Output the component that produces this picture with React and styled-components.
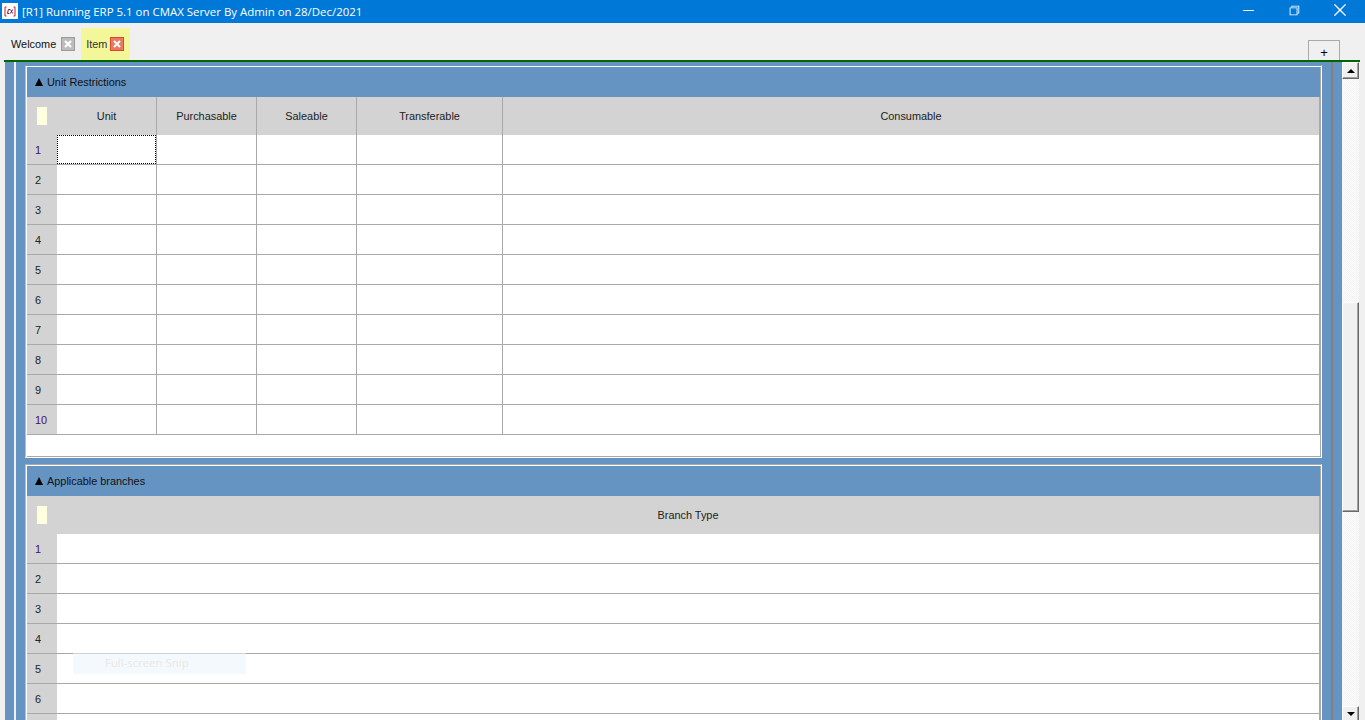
import React from "react";
import styled, { createGlobalStyle } from "styled-components";
import { VscChromeMinimize, VscChromeRestore, VscChromeClose } from "react-icons/vsc";

const GlobalStyle = createGlobalStyle`
  html, body {
    margin: 0;
    padding: 0;
    height: 720px;
    overflow: hidden;
    background: #f0f0f0;
  }
`;

const Page = styled.div`
  width: 1365px;
  height: 720px;
  display: flex;
  flex-direction: column;
  overflow: hidden;
  font-family: "Liberation Sans", Arial, sans-serif;
  font-size: 10.9px;
  color: #000;
`;

const TitleBar = styled.div`
  height: 23px;
  flex: none;
  display: flex;
  align-items: center;
  padding-right: 2px;
  background: #0078d7;
  color: #fff;
`;

const AppIcon = styled.svg`
  width: 16px;
  height: 16px;
  margin: -1px 4px 0 2px;
  flex: none;
`;

const TitleText = styled.span`
  font-family: "Open Sans", "Liberation Sans", sans-serif;
  font-size: 11.45px;
  flex: 1;
`;

const WindowButton = styled.button`
  width: 46px;
  height: 23px;
  padding: 0;
  border: 0;
  background: none;
  color: #fff;
  display: flex;
  align-items: center;
  justify-content: center;
  margin-top: -3px;
  font-size: ${(p) => p.$size || 16}px;
`;

const TabStrip = styled.div`
  height: 37px;
  flex: none;
  display: flex;
  align-items: stretch;
  padding: 5px 25px 0 5px;
  box-sizing: border-box;
`;

const Tab = styled.div`
  display: flex;
  align-items: center;
  gap: ${(p) => (p.$active ? 3 : 5)}px;
  height: 32px;
  padding: 0 6px 0 ${(p) => (p.$active ? 5 : 6)}px;
  background: ${(p) => (p.$active ? "#f4f799" : "transparent")};
  color: ${(p) => (p.$active ? "#333" : "#111")};
`;

const TabClose = styled.span`
  width: 14px;
  height: 14px;
  box-sizing: border-box;
  border: 1px solid ${(p) => (p.$active ? "#d9492f" : "#999")};
  background: ${(p) => (p.$active ? "#e77a5f" : "#bdbdbd")};
  display: flex;
  align-items: center;
  justify-content: center;
`;

const AddTab = styled.div`
  margin-left: auto;
  align-self: flex-end;
  width: 32px;
  height: 20px;
  box-sizing: border-box;
  padding-top: 3px;
  border: 1px solid #aaa;
  border-bottom: 0;
  display: flex;
  align-items: center;
  justify-content: center;
  font-size: 13px;
`;

const GreenRule = styled.div`
  height: 2px;
  flex: none;
  margin: 0 5px 0 4px;
  background: #006400;
`;

const Body = styled.div`
  flex: 1;
  min-height: 0;
  display: flex;
  padding-left: 5px;
`;

const OuterFrame = styled.div`
  flex: 1;
  min-width: 0;
  padding-left: 9px;
  background: #6594c2;
  display: flex;
`;

const InnerFrame = styled.div`
  flex: 1;
  min-width: 0;
  border-left: 2px solid #f0f0f0;
  border-right: 2px solid #808080;
  margin-right: 9px;
  padding: 3px 9px 0 9px;
  display: flex;
  flex-direction: column;
  gap: 6px;
  overflow: hidden;
`;

const Panel = styled.section`
  flex: none;
  border: 1px solid;
  border-color: ${(p) => (p.$clipped ? "#6594c2" : "#a9a9a9")} #fff #fff #bdbdbd;
  box-shadow: inset 1px 1px 0 #fff, inset -1px -1px 0 #a9a9a9;
  background: #fff;
  padding: 1px;
  box-sizing: border-box;
`;

const PanelHeader = styled.div`
  height: 30px;
  background: #6594c2;
  display: flex;
  align-items: center;
  padding-left: 8px;
  gap: 4px;
  color: #111;
`;

const Caret = styled.span`
  width: 0;
  height: 0;
  border-left: 4px solid transparent;
  border-right: 4px solid transparent;
  border-bottom: 8px solid #000;
`;

const Grid = styled.div`
  display: grid;
  grid-template-columns: ${(p) => p.$columns};
  border-right: 1px solid #a9a9a9;
`;

const HeaderCorner = styled.div`
  height: 38px;
  background: #d3d3d3;
  display: flex;
  align-items: center;
  padding-left: 10px;
`;

const Swatch = styled.div`
  width: 10px;
  height: 18px;
  background: #ffffe0;
`;

const HeaderCell = styled.div`
  height: 38px;
  background: #d3d3d3;
  border-right: ${(p) => (p.$last ? "0" : "1px solid #a9a9a9")};
  display: flex;
  align-items: center;
  justify-content: center;
  box-sizing: border-box;
  color: #222;
`;

const RowNumber = styled.div`
  height: 30px;
  box-sizing: border-box;
  padding-left: 8px;
  background: #d3d3d3;
  border-bottom: 1px solid #a9a9a9;
  display: flex;
  align-items: center;
  color: ${(p) => p.$color};
`;

const Cell = styled.div`
  height: 30px;
  box-sizing: border-box;
  background: #fff;
  border-bottom: 1px solid #a9a9a9;
  border-right: ${(p) => (p.$last ? "0" : "1px solid #a9a9a9")};
  position: relative;
`;

const FocusBox = styled.div`
  position: absolute;
  inset: 0;
  border: 1px dotted #000;
`;

const PanelFiller = styled.div`
  height: 21px;
`;

const SnipHint = styled.div`
  position: absolute;
  left: 73px;
  top: 653px;
  width: 173px;
  height: 21px;
  background: rgba(235, 244, 252, 0.55);
  color: #ebe7e4;
  font-family: "Open Sans", "Liberation Sans", sans-serif;
  font-size: 11.4px;
  display: flex;
  align-items: center;
  padding: 0 0 2px 32px;
  box-sizing: border-box;
`;

const ScrollBar = styled.div`
  width: 17px;
  flex: none;
  margin-right: 6px;
  display: flex;
  flex-direction: column;
  background: repeating-conic-gradient(#fff 0 25%, #f0f0f0 0 50%) 0 0 / 2px 2px;
`;

const ScrollButton = styled.div`
  height: ${(p) => p.$height}px;
  flex: none;
  box-sizing: border-box;
  background: #f0f0f0;
  border-top: 1px solid #fff;
  border-left: 1px solid #fff;
  border-right: 1px solid #696969;
  border-bottom: ${(p) => (p.$open ? "0" : "1px solid #696969")};
  box-shadow: inset -1px ${(p) => (p.$open ? 0 : -1)}px 0 #a0a0a0;
  display: flex;
  align-items: center;
  justify-content: center;
`;

const ScrollThumb = styled.div`
  height: ${(p) => p.$height}px;
  flex: none;
  margin-top: ${(p) => p.$top}px;
  box-sizing: border-box;
  background: #f0f0f0;
  border-top: 1px solid #fff;
  border-left: 1px solid #fff;
  border-right: 1px solid #696969;
  border-bottom: 1px solid #696969;
  box-shadow: inset -1px -1px 0 #a0a0a0;
`;

const ScrollSpacer = styled.div`
  flex: 1;
`;

const ArrowUp = styled.span`
  width: 0;
  height: 0;
  border-left: 4px solid transparent;
  border-right: 4px solid transparent;
  border-bottom: 4px solid #000;
`;

const ArrowDown = styled.span`
  width: 0;
  height: 0;
  border-left: 4px solid transparent;
  border-right: 4px solid transparent;
  border-top: 4px solid #000;
`;

const numberColors = ["#4b0f5c", "#222", "#222", "#222", "#222", "#222", "#222", "#222", "#222", "#4b0f5c"];

function CloseGlyph() {
  return (
    <svg width="8" height="8" viewBox="0 0 8 8">
      <path d="M1 1l6 6M7 1l-6 6" stroke="#fff" strokeWidth="2" fill="none" />
    </svg>
  );
}

// labelled: how many row numbers are on screen, the rest sit below the fold
function DataGrid({ columns, template, rows, labelled = rows, focusFirst }) {
  return (
    <Grid $columns={template}>
      <HeaderCorner>
        <Swatch />
      </HeaderCorner>
      {columns.map((name, i) => (
        <HeaderCell key={name} $last={i === columns.length - 1}>
          {name}
        </HeaderCell>
      ))}
      {Array.from({ length: rows }, (_, r) => (
        <React.Fragment key={r}>
          <RowNumber $color={numberColors[r]}>{r < labelled ? r + 1 : ""}</RowNumber>
          {columns.map((name, c) => (
            <Cell key={name} $last={c === columns.length - 1}>
              {focusFirst && r === 0 && c === 0 && <FocusBox />}
            </Cell>
          ))}
        </React.Fragment>
      ))}
    </Grid>
  );
}

export default function App() {
  return (
    <Page>
      <GlobalStyle />
      <TitleBar>
        <AppIcon viewBox="0 0 16 16">
          <rect width="16" height="16" fill="#fff" />
          <path d="M4.5 4H3v9h1.5M11.5 4H13v9h-1.5" stroke="#c02030" fill="none" />
          <path d="M8 6.5H6.4L5.5 10.5H7.4M8.6 6.5l2 4M10.8 6.5l-2.6 4" stroke="#701a40" strokeWidth="1" fill="none" />
        </AppIcon>
        <TitleText>[R1] Running ERP 5.1 on CMAX Server By Admin on 28/Dec/2021</TitleText>
        <WindowButton $size={16}>
          <VscChromeMinimize />
        </WindowButton>
        <WindowButton $size={14}>
          <VscChromeRestore />
        </WindowButton>
        <WindowButton $size={18}>
          <VscChromeClose />
        </WindowButton>
      </TitleBar>
      <TabStrip>
        <Tab>
          Welcome
          <TabClose>
            <CloseGlyph />
          </TabClose>
        </Tab>
        <Tab $active>
          Item
          <TabClose $active>
            <CloseGlyph />
          </TabClose>
        </Tab>
        <AddTab>+</AddTab>
      </TabStrip>
      <GreenRule />
      <Body>
        <OuterFrame>
          <InnerFrame>
            <Panel $clipped>
              <PanelHeader>
                <Caret />
                Unit Restrictions
              </PanelHeader>
              <DataGrid
                template="30px 100px 100px 100px 146px 1fr"
                columns={["Unit", "Purchasable", "Saleable", "Transferable", "Consumable"]}
                rows={10}
                focusFirst
              />
              <PanelFiller />
            </Panel>
            <Panel>
              <PanelHeader>
                <Caret />
                Applicable branches
              </PanelHeader>
              <DataGrid template="30px 1fr" columns={["Branch Type"]} rows={7} labelled={6} />
            </Panel>
          </InnerFrame>
        </OuterFrame>
        <ScrollBar>
          <ScrollButton $height={17}>
            <ArrowUp />
          </ScrollButton>
          <ScrollThumb $top={223} $height={210} />
          <ScrollSpacer />
          <ScrollButton $height={14} $open>
            <ArrowDown />
          </ScrollButton>
        </ScrollBar>
      </Body>
      <SnipHint>Full-screen Snip</SnipHint>
    </Page>
  );
}
